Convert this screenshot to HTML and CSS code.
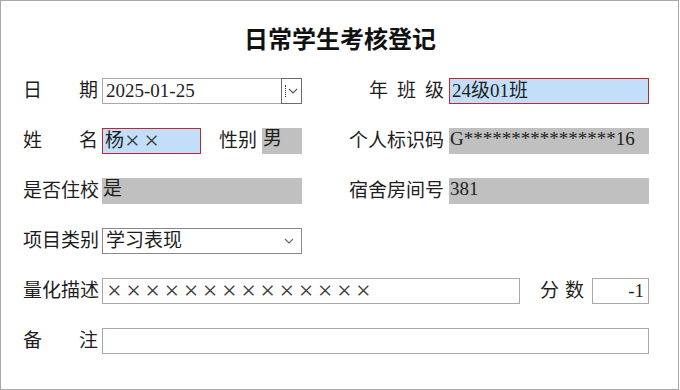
FILE: index.html
```html
<!DOCTYPE html>
<html lang="zh-CN">
<head>
 <meta charset="UTF-8">
 <title>日常学生考核登记</title>
 <link rel="stylesheet" href="styles.css">
</head>
<body>
 <div class="sheet">
 <h1 class="title">日常学生考核登记</h1>

 <div class="row">
 <span class="label">日期</span>
 <div class="field date">
 <span class="date-text">2025-01-25</span>
 <span class="date-btn">
 <span class="focus-dot"></span>
 <svg width="10" height="6" viewBox="0 0 10 6"><path d="M1 1 L5 5 L9 1" fill="none" stroke="#555" stroke-width="1.1"/></svg>
 </span>
 </div>
 <span class="label-r"><span class="label">年班级</span></span>
 <div class="field active">24级01班</div>
 </div>

 <div class="row">
 <span class="label">姓名</span>
 <div class="pair">
 <div class="field active name">杨<span class="cross">××</span></div>
 <span class="sub-label">性别</span>
 <div class="field locked sex">男</div>
 </div>
 <span class="label-r">个人标识码</span>
 <div class="field locked">G****************16</div>
 </div>

 <div class="row">
 <span class="label">是否住校</span>
 <div class="field locked">是</div>
 <span class="label-r">宿舍房间号</span>
 <div class="field locked">381</div>
 </div>

 <div class="row">
 <span class="label">项目类别</span>
 <div class="field select">
 <span>学习表现</span>
 <svg width="10" height="6" viewBox="0 0 10 6"><path d="M1 1 L5 5 L9 1" fill="none" stroke="#666" stroke-width="1.1"/></svg>
 </div>
 </div>

 <div class="row wide">
 <span class="label">量化描述</span>
 <div class="pair">
 <div class="field desc"><span class="cross">××××××××××××××</span></div>
 <span class="label score-label">分数</span>
 <div class="field score">-1</div>
 </div>
 </div>

 <div class="row wide">
 <span class="label">备注</span>
 <div class="field"></div>
 </div>
 </div>
</body>
</html>
```

FILE: styles.css
```css
body {
margin: 0;
padding: 0;
background: #fff;
font-family: "Liberation Serif", "Noto Sans CJK SC", serif;
font-size: 19px;
color: #1e1e1e;
}
.sheet {
width: 679px;
height: 390px;
box-sizing: border-box;
border: 1px solid #a8a8a8;
padding: 22px 0 0 22px;
}
.title {
margin: 0;
width: 634px;
text-align: center;
font-family: "Noto Sans CJK SC", sans-serif;
font-size: 24px;
line-height: 30px;
font-weight: bold;
color: #111;
}
.row {
display: grid;
grid-template-columns: 75px 200px 139px 200px;
column-gap: 4px;
width: 626px;
height: 26px;
margin-top: 24px;
align-items: center;
}
.row:first-of-type {
margin-top: 25px;
}
.row.wide {
grid-template-columns: 75px 1fr;
}
.label {
display: block;
width: 75px;
text-align: justify;
text-align-last: justify;
line-height: 26px;
white-space: nowrap;
}
.label-r {
display: flex;
justify-content: flex-end;
line-height: 26px;
white-space: nowrap;
padding-right: 1px;
}
.field {
box-sizing: border-box;
height: 26px;
line-height: 24px;
border: 1px solid #a8a8a8;
padding: 0 3px;
white-space: nowrap;
background: #fff;
}
.field.active {
border-color: #c0282d;
background: #c2def8;
padding-left: 2px;
}
.field.locked {
border: none;
background: #c0c0c0;
padding: 0 1px;
line-height: 22px;
}
.pair {
display: flex;
align-items: center;
height: 26px;
}
.name {
display: flex;
align-items: center;
width: 99px;
}
.sub-label {
margin-left: auto;
margin-right: 5px;
line-height: 26px;
}
.sex {
width: 40px;
height: 26px;
}
.cross {
font-size: 26px;
line-height: 24px;
letter-spacing: 4.5px;
color: #3a3a3a;
}
.name .cross {
margin-left: 1px;
}
.desc {
display: flex;
align-items: center;
width: 418px;
padding-left: 4px;
}
.date {
display: flex;
padding: 0;
}
.date-text {
flex: 1;
padding-left: 3px;
}
.date-btn {
width: 21px;
box-sizing: border-box;
border: 1px solid #6a6a6a;
margin: -1px -1px -1px 0;
height: 26px;
display: flex;
align-items: center;
justify-content: center;
gap: 1px;
}
.focus-dot {
width: 1px;
height: 12px;
border-left: 1px dotted #333;
}
.select {
display: flex;
justify-content: space-between;
align-items: center;
border-color: #888;
}
.select svg {
margin-right: 4px;
}
.score-label {
width: 44px;
margin-left: auto;
margin-right: 8px;
}
.score {
width: 57px;
text-align: right;
padding-right: 4px;
}
```
